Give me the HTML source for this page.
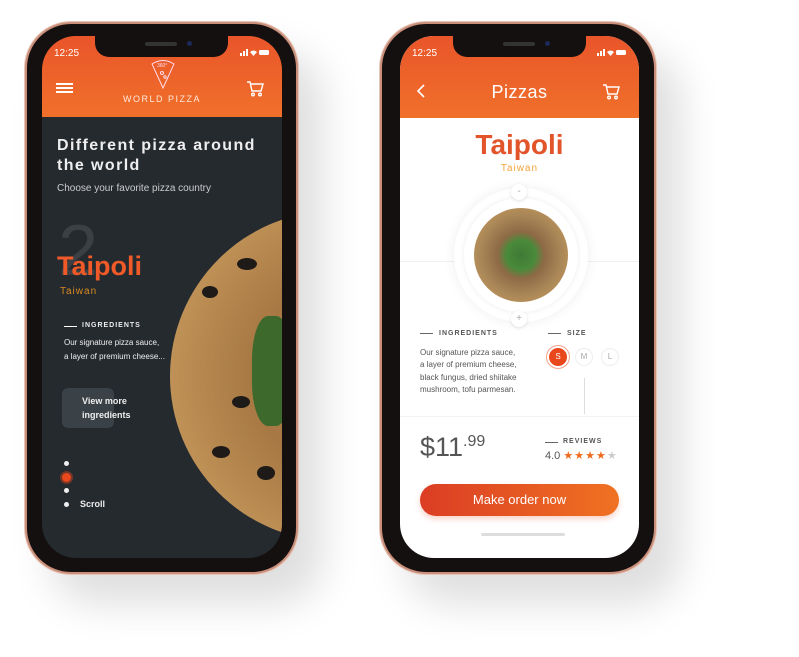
<!DOCTYPE html>
<html><head><meta charset="utf-8"><style>
*{margin:0;padding:0;box-sizing:border-box}
body{width:799px;height:657px;background:#fff;position:relative;overflow:hidden;font-family:"Liberation Sans",sans-serif}
.phone{position:absolute;border-radius:46px;background:#141010;border:2px solid #c98f7a;box-shadow:0 0 0 1px #e7c4b6,25px 30px 40px rgba(0,0,0,.13)}
.screen{position:absolute;border-radius:34px;overflow:hidden}
.notch{position:absolute;top:0;left:53px;width:133px;height:21px;background:#141010;border-radius:0 0 14px 14px}
.notch:before{content:"";position:absolute;left:50px;top:6px;width:32px;height:4px;border-radius:2px;background:#333}
.notch:after{content:"";position:absolute;left:92px;top:5px;width:5px;height:5px;border-radius:50%;background:#1b2a5a}
.time{position:absolute;top:12px;left:12px;font-size:10px;color:#fff}
.stat{position:absolute;top:13px;right:12px;width:30px;height:7px}
.hdr{position:absolute;left:0;top:0;width:100%;background:linear-gradient(#e9552a,#f0702a)}
</style></head><body>

<!-- phone 1 -->
<div class="phone" style="left:25px;top:22px;width:273px;height:552px"></div>
<div class="screen" style="left:42px;top:36px;width:240px;height:522px;background:#252a2f">
  <div style="position:absolute;left:128px;top:175px;width:330px;height:330px;border-radius:50%;background:radial-gradient(circle at 55% 50%,#b78a52 0%,#a77843 40%,#c79a5e 85%,#e0c28e 92%,#d4b080 100%)"></div>
  <div style="position:absolute;left:210px;top:280px;width:40px;height:110px;border-radius:40%;background:#3d6a2c"></div>
  <div style="position:absolute;left:160px;top:250px;width:16px;height:12px;border-radius:50%;background:#1e1a18"></div>
  <div style="position:absolute;left:190px;top:360px;width:18px;height:12px;border-radius:50%;background:#1e1a18"></div>
  <div style="position:absolute;left:170px;top:410px;width:18px;height:12px;border-radius:50%;background:#1e1a18"></div>
  <div style="position:absolute;left:215px;top:430px;width:18px;height:14px;border-radius:50%;background:#1e1a18"></div>
  <div style="position:absolute;left:195px;top:222px;width:20px;height:12px;border-radius:50%;background:#1e1a18"></div>
  <div class="hdr" style="height:81px"></div>
  <div class="notch"></div>
  <div class="time">12:25</div>
  <svg class="stat" viewBox="0 0 30 7"><rect x="0" y="4" width="2" height="3" fill="#fff"/><rect x="3" y="2" width="2" height="5" fill="#fff"/><rect x="6" y="0" width="2" height="7" fill="#fff"/><path d="M10 3 Q13.5 0 17 3 L13.5 7Z" fill="#fff"/><rect x="19" y="1" width="10" height="5" rx="1.5" fill="#fff"/></svg>
  <div style="position:absolute;left:14px;top:47px;width:17px;height:2px;background:#fff;box-shadow:0 4px 0 #fff,0 8px 0 #fff"></div>
  <svg style="position:absolute;left:108px;top:22px" width="26" height="32" viewBox="0 0 26 32" fill="none" stroke="#fde" stroke-width="1"><path d="M2 6 Q13 -1 24 6 L13 30 Z"/><text x="7" y="9" font-size="5" fill="#fde" stroke="none">360°</text><circle cx="12" cy="15" r="1.5"/><circle cx="15" cy="19" r="1.2"/></svg>
  <div style="position:absolute;left:0;width:100%;top:58px;text-align:center;font-size:9px;letter-spacing:1.5px;color:#ffe9dc">WORLD PIZZA</div>
  <svg style="position:absolute;left:204px;top:45px" width="18" height="16" viewBox="0 0 18 16" fill="none" stroke="#fff" stroke-width="1.4"><path d="M1 1h3l2 9h9l2-7H5"/><circle cx="7" cy="13.5" r="1.3"/><circle cx="14" cy="13.5" r="1.3"/></svg>
  <div style="position:absolute;left:15px;top:100px;font-size:16px;font-weight:bold;letter-spacing:1.4px;line-height:20px;color:#eee">Different pizza around<br>the world</div>
  <div style="position:absolute;left:15px;top:147px;font-size:10px;color:#ccc">Choose your favorite pizza country</div>
  <div style="position:absolute;left:16px;top:175px;font-size:72px;color:#3c4045;line-height:80px">2</div>
  <div style="position:absolute;left:15px;top:215px;font-size:27px;font-weight:bold;color:#ef5a28">Taipoli</div>
  <div style="position:absolute;left:18px;top:250px;font-size:10px;letter-spacing:1px;color:#d98a20">Taiwan</div>
  <div style="position:absolute;left:22px;top:290px;width:13px;height:1px;background:#fff"></div>
  <div style="position:absolute;left:40px;top:286px;font-size:7px;font-weight:bold;letter-spacing:1px;color:#eee">INGREDIENTS</div>
  <div style="position:absolute;left:22px;top:300px;font-size:8px;line-height:14px;color:#eee">Our signature pizza sauce,<br>a layer of premium cheese...</div>
  <div style="position:absolute;left:20px;top:352px;width:52px;height:40px;border-radius:6px;background:#3a4247"></div>
  <div style="position:absolute;left:40px;top:358px;font-size:9px;font-weight:bold;line-height:14px;color:#eee">View more<br>ingredients</div>
  <div style="position:absolute;left:22px;top:425px;width:5px;height:5px;border-radius:50%;background:#eee"></div>
  <div style="position:absolute;left:20px;top:437px;width:9px;height:9px;border-radius:50%;background:#e9481c;box-shadow:0 0 0 2px rgba(233,72,28,.4)"></div>
  <div style="position:absolute;left:22px;top:452px;width:5px;height:5px;border-radius:50%;background:#eee"></div>
  <div style="position:absolute;left:22px;top:466px;width:5px;height:5px;border-radius:50%;background:#eee"></div>
  <div style="position:absolute;left:38px;top:463px;font-size:9px;font-weight:bold;color:#eee">Scroll</div>
</div>

<!-- phone 2 -->
<div class="phone" style="left:380px;top:22px;width:276px;height:552px"></div>
<div class="screen" style="left:400px;top:36px;width:239px;height:522px;background:#fff">
  <div class="hdr" style="height:82px"></div>
  <div class="notch"></div>
  <div class="time">12:25</div>
  <svg class="stat" viewBox="0 0 30 7"><rect x="0" y="4" width="2" height="3" fill="#fff"/><rect x="3" y="2" width="2" height="5" fill="#fff"/><rect x="6" y="0" width="2" height="7" fill="#fff"/><path d="M10 3 Q13.5 0 17 3 L13.5 7Z" fill="#fff"/><rect x="19" y="1" width="10" height="5" rx="1.5" fill="#fff"/></svg>
  <svg style="position:absolute;left:17px;top:48px" width="9" height="14" viewBox="0 0 9 14" fill="none" stroke="#fff" stroke-width="1.6"><path d="M7 1L1 7l6 6"/></svg>
  <div style="position:absolute;left:0;width:100%;top:46px;text-align:center;font-size:18px;letter-spacing:.5px;color:#fff">Pizzas</div>
  <svg style="position:absolute;left:202px;top:48px" width="18" height="16" viewBox="0 0 18 16" fill="none" stroke="#fff" stroke-width="1.4"><path d="M1 1h3l2 9h9l2-7H5"/><circle cx="7" cy="13.5" r="1.3"/><circle cx="14" cy="13.5" r="1.3"/></svg>
  <div style="position:absolute;left:0;width:100%;top:93px;text-align:center;font-size:28px;font-weight:bold;color:#e2542a">Taipoli</div>
  <div style="position:absolute;left:0;width:100%;top:127px;text-align:center;font-size:10px;letter-spacing:1px;color:#f3a33a">Taiwan</div>
  <div style="position:absolute;left:0;top:225px;width:100%;height:1px;background:#f0f0f0"></div>
  <div style="position:absolute;left:54px;top:152px;width:134px;height:134px;border-radius:50%;background:#fff;box-shadow:0 0 12px rgba(0,0,0,.07)"></div>
  <div style="position:absolute;left:64px;top:162px;width:114px;height:114px;border-radius:50%;background:#fff;box-shadow:0 0 6px rgba(0,0,0,.08)"></div>
  <div style="position:absolute;left:74px;top:172px;width:94px;height:94px;border-radius:50%;background:radial-gradient(circle,#3e7a35 0%,#4a8a3a 22%,#8d6a45 35%,#a98657 60%,#c59c5e 88%,#d9a55e 100%)"></div>
  <div style="position:absolute;left:111px;top:148px;width:16px;height:16px;border-radius:50%;background:#fff;box-shadow:0 1px 3px rgba(0,0,0,.12);text-align:center;font-size:10px;line-height:15px;color:#aaa">-</div>
  <div style="position:absolute;left:111px;top:275px;width:16px;height:16px;border-radius:50%;background:#fff;box-shadow:0 1px 3px rgba(0,0,0,.12);text-align:center;font-size:10px;line-height:15px;color:#aaa">+</div>
  <div style="position:absolute;left:20px;top:297px;width:13px;height:1px;background:#666"></div>
  <div style="position:absolute;left:39px;top:294px;font-size:7px;font-weight:bold;letter-spacing:1px;color:#555">INGREDIENTS</div>
  <div style="position:absolute;left:148px;top:297px;width:13px;height:1px;background:#666"></div>
  <div style="position:absolute;left:167px;top:294px;font-size:7px;font-weight:bold;letter-spacing:1px;color:#555">SIZE</div>
  <div style="position:absolute;left:20px;top:311px;font-size:8px;line-height:12.3px;color:#555">Our signature pizza sauce,<br>a layer of premium cheese,<br>black fungus, dried shiitake<br>mushroom, tofu parmesan.</div>
  <div style="position:absolute;left:149px;top:312px;width:18px;height:18px;border-radius:50%;background:#e9481c;box-shadow:0 0 0 2px #fff,0 0 0 3px #f3a38c;color:#fff;font-size:8px;text-align:center;line-height:18px">S</div>
  <div style="position:absolute;left:175px;top:312px;width:18px;height:18px;border-radius:50%;border:1px solid #eee;color:#aaa;font-size:8px;text-align:center;line-height:16px">M</div>
  <div style="position:absolute;left:201px;top:312px;width:18px;height:18px;border-radius:50%;border:1px solid #eee;color:#aaa;font-size:8px;text-align:center;line-height:16px">L</div>
  <div style="position:absolute;left:184px;top:342px;width:1px;height:36px;background:#ddd"></div>
  <div style="position:absolute;left:0;top:380px;width:100%;height:1px;background:#f3f3f3"></div>
  <div style="position:absolute;left:20px;top:396px;font-size:27px;color:#555">$11<span style="font-size:16px;vertical-align:10px">.99</span></div>
  <div style="position:absolute;left:145px;top:406px;width:13px;height:1px;background:#666"></div>
  <div style="position:absolute;left:163px;top:402px;font-size:7px;font-weight:bold;letter-spacing:1px;color:#555">REVIEWS</div>
  <div style="position:absolute;left:145px;top:413px;font-size:11px;color:#555">4.0 <span style="color:#ee6b1e;font-size:11px;letter-spacing:1px">★★★★</span><span style="color:#ccc;font-size:11px">★</span></div>
  <div style="position:absolute;left:20px;top:448px;width:199px;height:32px;border-radius:16px;background:linear-gradient(90deg,#db3d24,#f07222);box-shadow:0 3px 6px rgba(230,80,40,.25);color:#fff;font-size:13px;text-align:center;line-height:32px">Make order now</div>
  <div style="position:absolute;left:81px;top:497px;width:84px;height:3px;border-radius:2px;background:#ddd"></div>
</div>
</body></html>
